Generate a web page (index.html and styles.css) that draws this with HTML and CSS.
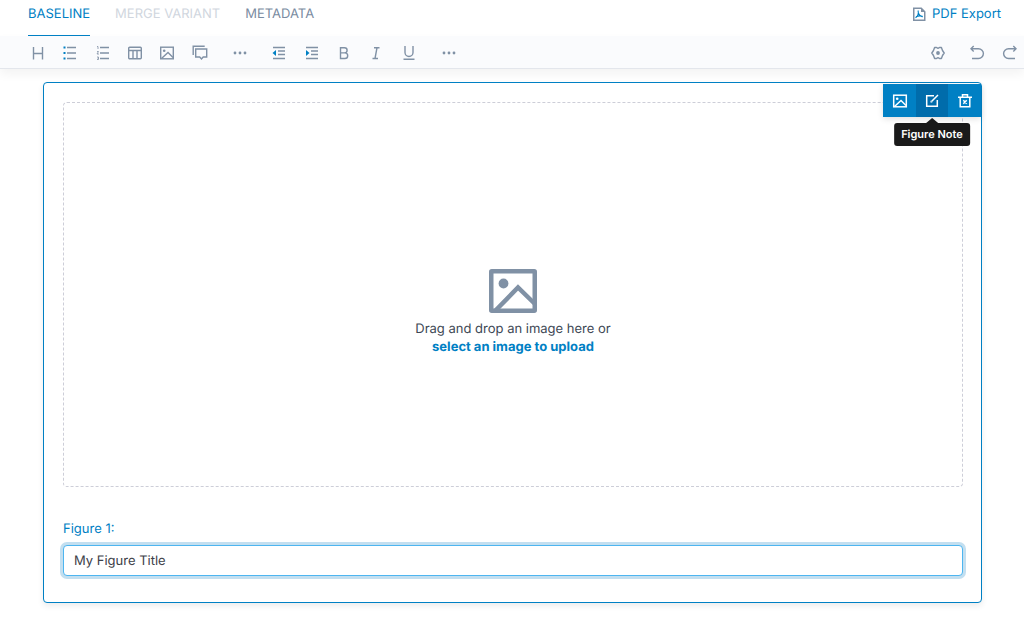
FILE: index.html
```html
<!DOCTYPE html>
<html lang="en">
<head>
<meta charset="utf-8">
<meta name="viewport" content="width=device-width, initial-scale=1">
<title>Figure editor</title>
<link rel="stylesheet" href="styles.css">
</head>
<body>
<header class="header">
  <nav class="tabs">
    <a class="tab tab-active" href="#baseline">BASELINE</a>
    <a class="tab tab-disabled" href="#variant" aria-disabled="true">MERGE VARIANT</a>
    <a class="tab" href="#metadata">METADATA</a>
  </nav>
  <a class="export" href="#export">
    <svg width="14" height="14" viewBox="0 0 14 14" fill="none" stroke="#8091a5" stroke-width="1.5"><path d="M1.750 1.250h7.500l3.500 3.500v8.500h-11z"/><path d="M9 1v4h4z" fill="#8091a5" stroke="none"/><path d="M3.500 10.800C5.800 9.500 7 6 6 3.500M6.400 6C7 8 8.500 9.500 10.800 9.600M4 9.800C6 8.800 8 8.500 10.500 9.300" stroke="#0080c4" stroke-width="1.100"/></svg>
    <span>PDF Export</span>
  </a>
</header>

<div class="toolbar" role="toolbar" aria-label="Formatting">
  <div class="tools tools-insert">
    <button class="tool" type="button" aria-label="Heading"><svg width="16" height="16" viewBox="0 0 16 16"><path d="M3.500 2v12.500M12.500 2v12.500M3.500 8.500h9"/></svg></button>
    <button class="tool" type="button" aria-label="Bulleted list"><svg width="16" height="16" viewBox="0 0 16 16"><path d="M5 2.500h9M5 8h9M5 13.500h9"/><path class="accent-fill" d="M1.500 1.500h2v2h-2zM1.500 7h2v2h-2zM1.500 12.500h2v2h-2z"/></svg></button>
    <button class="tool" type="button" aria-label="Numbered list"><svg width="16" height="16" viewBox="0 0 16 16"><path d="M5 2.500h9M5 8h9M5 13.500h9"/><path class="thin" d="M2 1.500h1v2.500M2 6.500h1.500L2 9h2M2 12h1.500v2.500H2M2.500 13.200h1"/></svg></button>
    <button class="tool" type="button" aria-label="Table"><svg width="16" height="16" viewBox="0 0 16 16"><rect x="1.700" y="2.200" width="12.600" height="11.600" rx="1"/><path d="M2 5.500h12M6 5.500v8M10 5.500v8"/></svg></button>
    <button class="tool" type="button" aria-label="Image"><svg width="16" height="16" viewBox="0 0 16 16"><rect x="1.700" y="2.200" width="12.600" height="11.600"/><path d="M2.500 13.500 9 7.500l5 5"/><circle class="dot" cx="5.200" cy="5.700" r="1.300"/></svg></button>
    <button class="tool" type="button" aria-label="Comment"><svg width="16" height="16" viewBox="0 0 16 16"><path d="M1.200 10V1.200h11.500M3.700 4h11v8h-3.500L9.500 14 7.700 12h-4z"/></svg></button>
  </div>
  <button class="tool tool-more" type="button" aria-label="More insert options"><svg width="16" height="16" viewBox="0 0 16 16"><circle class="dot" cx="3" cy="8" r="1.400"/><circle class="dot" cx="8" cy="8" r="1.400"/><circle class="dot" cx="13" cy="8" r="1.400"/></svg></button>
  <div class="tools tools-format">
    <button class="tool" type="button" aria-label="Decrease indent"><svg width="16" height="16" viewBox="0 0 16 16"><path d="M2 2.500h12M7 6h7M7 9.500h7M2 13.500h12"/><path class="accent-fill" d="M5 5v6L1.500 8z"/></svg></button>
    <button class="tool" type="button" aria-label="Increase indent"><svg width="16" height="16" viewBox="0 0 16 16"><path d="M2 2.500h12M7 6h7M7 9.500h7M2 13.500h12"/><path class="accent-fill" d="M2 5v6l3.500-3z"/></svg></button>
    <button class="tool" type="button" aria-label="Bold"><svg width="16" height="16" viewBox="0 0 16 16"><path d="M4.500 2.700h4a2.600 2.600 0 0 1 0 5.200h-4zM4.500 7.900h4.400a2.800 2.800 0 0 1 0 5.600H4.500z"/></svg></button>
    <button class="tool" type="button" aria-label="Italic"><svg width="16" height="16" viewBox="0 0 16 16"><path d="M6 2.700h5.500M4.500 13.500H10M9 2.700 7 13.500"/></svg></button>
    <button class="tool" type="button" aria-label="Underline"><svg width="16" height="16" viewBox="0 0 16 16"><path d="M4 1v6.500a4 4 0 0 0 8 0V1M2.500 14.200h11"/></svg></button>
  </div>
  <button class="tool tool-more" type="button" aria-label="More formatting options"><svg width="16" height="16" viewBox="0 0 16 16"><circle class="dot" cx="3" cy="8" r="1.400"/><circle class="dot" cx="8" cy="8" r="1.400"/><circle class="dot" cx="13" cy="8" r="1.400"/></svg></button>
  <div class="actions">
    <button class="tool tool-settings" type="button" aria-label="Settings"><svg width="16" height="16" viewBox="0 0 16 16"><path stroke-linejoin="round" d="M4.600 2.500h2L8 3.300l1.400-.8h2l1.100 3L14.200 8l-1.700 2.500-1.100 3h-2L8 12.700l-1.400.8h-2l-1.100-3L1.800 8l1.700-2.500z"/><circle class="dot" cx="8" cy="8" r="1.900"/></svg></button>
    <button class="tool" type="button" aria-label="Undo"><svg width="16" height="16" viewBox="0 0 16 16"><path d="M4.700 1 2 3.700l2.700 2.700M2 3.700h7.500a4.900 4.900 0 0 1 0 9.800H3"/></svg></button>
    <button class="tool" type="button" aria-label="Redo"><svg width="16" height="16" viewBox="0 0 16 16"><path d="M11.300 1 14 3.700l-2.700 2.700M14 3.700H6.500a4.900 4.900 0 0 0 0 9.800H13"/></svg></button>
  </div>
</div>

<main class="page">
  <section class="card">
    <div class="dropzone">
      <svg class="picture" width="48" height="44" viewBox="0 0 48 44"><rect x="2.250" y="2.250" width="43.500" height="39.500" rx="0.500"/><path d="M6.500 41.500 29 18.500l17 16.500"/><circle class="dot" cx="14.500" cy="14.500" r="4.900"/></svg>
      <p class="hint">Drag and drop an image here or</p>
      <a class="upload" href="#upload">select an image to upload</a>
    </div>
    <label class="label" for="figure-title">Figure 1:</label>
    <input class="field" id="figure-title" type="text" value="My Figure Title">
    <div class="menu">
      <button class="menu-item" type="button" aria-label="Figure image"><svg width="16" height="16" viewBox="0 0 16 16"><rect x="1.700" y="2.200" width="12.600" height="11.600"/><path d="M2.500 13.500 9 7.500l5 5"/><circle class="dot" cx="5.200" cy="5.700" r="1.300"/></svg></button>
      <button class="menu-item menu-item-active" type="button" aria-describedby="note-tip" aria-label="Figure Note"><svg width="16" height="16" viewBox="0 0 16 16"><path d="M10 2.700H2.700v10.600h10.600V7M7.500 8.500 14 2"/><path class="dot" d="M6.500 7.500v2h2z"/></svg></button>
      <button class="menu-item" type="button" aria-label="Delete figure"><svg width="16" height="16" viewBox="0 0 16 16"><path d="M1 4.200h14M5.500 4V1.700h5V4M3.200 4.500v9.300h9.600V4.500M6.300 7.300l3.400 3.400M9.700 7.300l-3.400 3.400"/></svg></button>
      <div class="tooltip" id="note-tip" role="tooltip">Figure Note</div>
    </div>
  </section>
</main>
</body>
</html>
```

FILE: styles.css
```css
* { box-sizing: border-box; }

body {
  margin: 0;
  background: #fff;
  color: #3d4754;
  font: 13px/18px Inter, "Liberation Sans", sans-serif;
  text-rendering: geometricPrecision;
}

a { text-decoration: none; }

button {
  margin: 0;
  padding: 0;
  border: 0;
  background: none;
  cursor: pointer;
}

svg {
  display: block;
  flex: none;
  fill: none;
}

.header {
  display: flex;
  justify-content: space-between;
  padding: 0 23px 0 28px;
}

.tabs {
  display: flex;
  gap: 25px;
}

.tab {
  height: 36px;
  padding-top: 5px;
  border-bottom: 1px solid transparent;
  color: #7a8ba1;
}

.tab-active {
  border-color: #0080c4;
  color: #0080c4;
}

.tab-disabled { color: #d0d6de; }

.export {
  display: flex;
  align-items: center;
  gap: 6px;
  height: 28px;
  color: #0080c4;
}

.toolbar {
  display: flex;
  align-items: center;
  height: 33px;
  padding-left: 22px;
  border-bottom: 1px solid #e3e6ec;
  background: #fafbfd;
  box-shadow: 0 5px 10px rgba(0, 0, 0, 0.05);
}

.tools {
  display: grid;
  grid-auto-flow: column;
  grid-auto-columns: 1fr;
}

.tools-insert { width: 194px; }
.tools-format { width: 162px; }

.tool {
  display: flex;
  align-items: center;
  justify-content: center;
  height: 32px;
  padding-top: 2px;
  stroke: #8091a5;
  stroke-width: 1.4;
}

.tool-more {
  width: 33px;
  margin: 0 7px;
}

.dot {
  fill: #8091a5;
  stroke: none;
}

.accent-fill {
  fill: #0080c4;
  stroke: none;
}

.thin { stroke-width: 0.8; }

.actions {
  display: flex;
  gap: 5px;
  margin-left: auto;
}

.actions .tool { width: 28px; }
.actions .tool-settings { margin-right: 6px; }

.page { padding: 13px 42px 24px 43px; }

.card {
  position: relative;
  padding: 19px 18px 26px 19px;
  border: 1px solid #0080c4;
  border-radius: 4px;
  background: #fff;
  box-shadow: 0 3px 6px rgba(0, 0, 0, 0.08);
}

.dropzone {
  display: flex;
  flex-direction: column;
  align-items: center;
  justify-content: center;
  min-height: 385px;
  padding-top: 36px;
  border: 1px dashed #cdced8;
  border-radius: 4px;
}

.picture {
  margin-bottom: 7px;
  stroke: #8091a5;
  stroke-width: 4.5;
}

.hint { margin: 0; }

.upload {
  color: #0080c4;
  font-weight: 700;
}

.label {
  display: block;
  margin: 33px 0 7px;
  color: #0080c4;
}

.field {
  display: block;
  width: 100%;
  height: 31px;
  padding: 0 10px;
  border: 1px solid #4db5f0;
  border-radius: 4px;
  outline: 0;
  background: #fff;
  box-shadow: 0 0 0 3px #c3dff0;
  color: #3d4148;
  font: inherit;
  text-rendering: inherit;
}

.menu {
  position: absolute;
  top: 1px;
  right: 0;
  display: flex;
  background: #0080c4;
  box-shadow: 0 2px 6px rgba(0, 0, 0, 0.12);
}

.menu-item {
  display: flex;
  align-items: center;
  justify-content: center;
  width: 33px;
  height: 33px;
  stroke: #fff;
  stroke-width: 1.5;
}

.menu-item .dot { fill: #fff; }

.menu-item-active {
  width: 32px;
  background: #006cab;
}

.tooltip {
  position: absolute;
  top: 39px;
  left: 50%;
  padding: 2px 7px 3px;
  border-radius: 3px;
  background: #1a1a1a;
  color: #fff;
  font-size: 11px;
  font-weight: 600;
  white-space: nowrap;
  transform: translateX(-50%);
}

.tooltip::before {
  content: "";
  position: absolute;
  bottom: 100%;
  left: 50%;
  margin-left: -6px;
  border: 6px solid transparent;
  border-top: 0;
  border-bottom: 5px solid #1a1a1a;
}
```
